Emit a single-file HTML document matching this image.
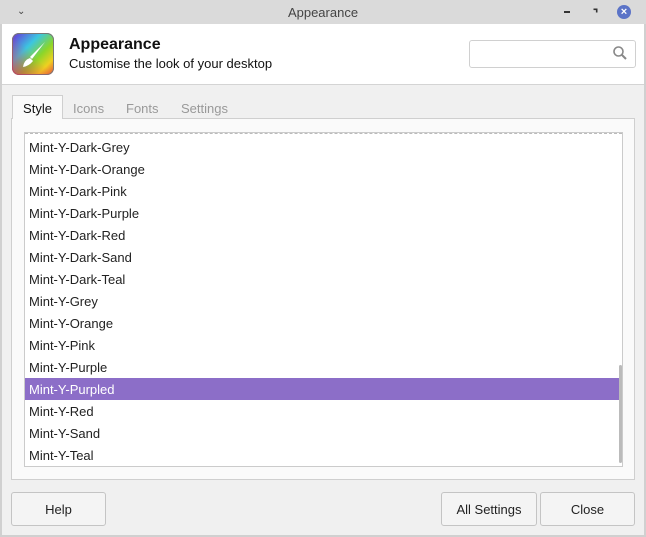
<!DOCTYPE html><html><head><style>
*{box-sizing:border-box}body{margin:0;width:646px;height:537px;background:#f0f0f0;font-family:"Liberation Sans",sans-serif;font-size:13px;color:#222;position:relative;overflow:hidden}
.a{position:absolute}
.tb{left:0;top:0;width:646px;height:24px;background:#dadada;text-align:center;line-height:26px;color:#444;font-size:13px}
.hd{left:0;top:24px;width:646px;height:61px;background:#fff;border-bottom:1px solid #d4d4d4;border-left:2px solid #d0d0d0;border-right:2px solid #d0d0d0}
.row{position:absolute;left:0;width:597px;height:22px;line-height:23px;padding-left:4px;font-size:13px}
.btn{position:absolute;top:492px;height:34px;border:1px solid #c4c4c4;border-radius:3px;background:#f4f4f4;text-align:center;line-height:34px;font-size:13px}
</style></head><body>
<div class="a tb">Appearance</div>
<div class="a" style="left:17px;top:6px;font-size:10px;color:#444">&#8964;</div>
<div class="a" style="left:564px;top:11px;width:6px;height:2px;background:#333"></div>
<div class="a" style="left:593px;top:8px;width:5px;height:5px;border-top:2px solid #333;border-right:2px solid #333;transform:scale(.8)"></div>
<div class="a" style="left:617px;top:5px;width:14px;height:14px;border-radius:50%;background:#5b73c7;color:#fff;font-size:11px;line-height:14px;text-align:center;font-weight:bold">×</div>
<div class="a hd"></div>
<div class="a" style="left:12px;top:33px;width:42px;height:42px;border-radius:7px;background:linear-gradient(135deg,#6a2bd9 0%,#3cc6e0 35%,#8ad62a 60%,#f0d020 80%,#e84040 100%);box-shadow:0 0 0 1px #777 inset"></div>
<div class="a" style="left:12px;top:33px;width:42px;height:42px;border-radius:7px;background:linear-gradient(45deg,rgba(230,40,80,.7),rgba(0,0,0,0) 50%)"></div>
<svg class="a" style="left:12px;top:33px" width="42" height="42"><path d="M33 9 L20 26 L18 24 Z" fill="#fff"/><path d="M18 25 Q12 27 11 34 Q17 33 21 28 Z" fill="#fff"/></svg>
<div class="a" style="left:69px;top:36px;font-size:16px;font-weight:bold;color:#111">Appearance</div>
<div class="a" style="left:69px;top:56px;font-size:13px;color:#111">Customise the look of your desktop</div>
<div class="a" style="left:469px;top:40px;width:167px;height:28px;border:1px solid #d0d0d0;border-radius:3px;background:#fff"></div>
<svg class="a" style="left:612px;top:45px" width="16" height="16"><circle cx="6.5" cy="6.5" r="4.5" fill="none" stroke="#888" stroke-width="1.6"/><path d="M10 10 L14 14" stroke="#888" stroke-width="2"/></svg>
<div class="a" style="left:11px;top:118px;width:624px;height:362px;border:1px solid #cfcfcf;background:#fafafa"></div>
<div class="a" style="left:12px;top:95px;width:51px;height:24px;border:1px solid #cfcfcf;border-bottom:none;background:#fafafa;text-align:center;line-height:26px;color:#111">Style</div>
<div class="a" style="left:73px;top:101px;color:#999">Icons</div>
<div class="a" style="left:126px;top:101px;color:#999">Fonts</div>
<div class="a" style="left:181px;top:101px;color:#999">Settings</div>
<div class="a" style="left:24px;top:132px;width:599px;height:335px;border:1px solid #cbcbcb;background:#fff;overflow:hidden">
<div class="a" style="left:0;top:0;width:597px;border-top:1px dashed #bbb"></div>
<div class="row" style="top:3px">Mint-Y-Dark-Grey</div>
<div class="row" style="top:25px">Mint-Y-Dark-Orange</div>
<div class="row" style="top:47px">Mint-Y-Dark-Pink</div>
<div class="row" style="top:69px">Mint-Y-Dark-Purple</div>
<div class="row" style="top:91px">Mint-Y-Dark-Red</div>
<div class="row" style="top:113px">Mint-Y-Dark-Sand</div>
<div class="row" style="top:135px">Mint-Y-Dark-Teal</div>
<div class="row" style="top:157px">Mint-Y-Grey</div>
<div class="row" style="top:179px">Mint-Y-Orange</div>
<div class="row" style="top:201px">Mint-Y-Pink</div>
<div class="row" style="top:223px">Mint-Y-Purple</div>
<div class="row" style="top:245px;background:#8c6ec8;color:#fff">Mint-Y-Purpled</div>
<div class="row" style="top:267px">Mint-Y-Red</div>
<div class="row" style="top:289px">Mint-Y-Sand</div>
<div class="row" style="top:311px">Mint-Y-Teal</div>
<div class="a" style="left:594px;top:232px;width:3px;height:98px;border-radius:2px;background:#bbb"></div>
</div>
<div class="btn" style="left:11px;width:95px">Help</div>
<div class="btn" style="left:441px;width:96px">All Settings</div>
<div class="btn" style="left:540px;width:95px">Close</div>
<div class="a" style="left:0;top:24px;width:2px;height:513px;background:#d0d0d0"></div>
<div class="a" style="right:0;top:24px;width:2px;height:513px;background:#d0d0d0"></div>
<div class="a" style="left:0;bottom:0;width:646px;height:2px;background:#d0d0d0"></div>
</body></html>
